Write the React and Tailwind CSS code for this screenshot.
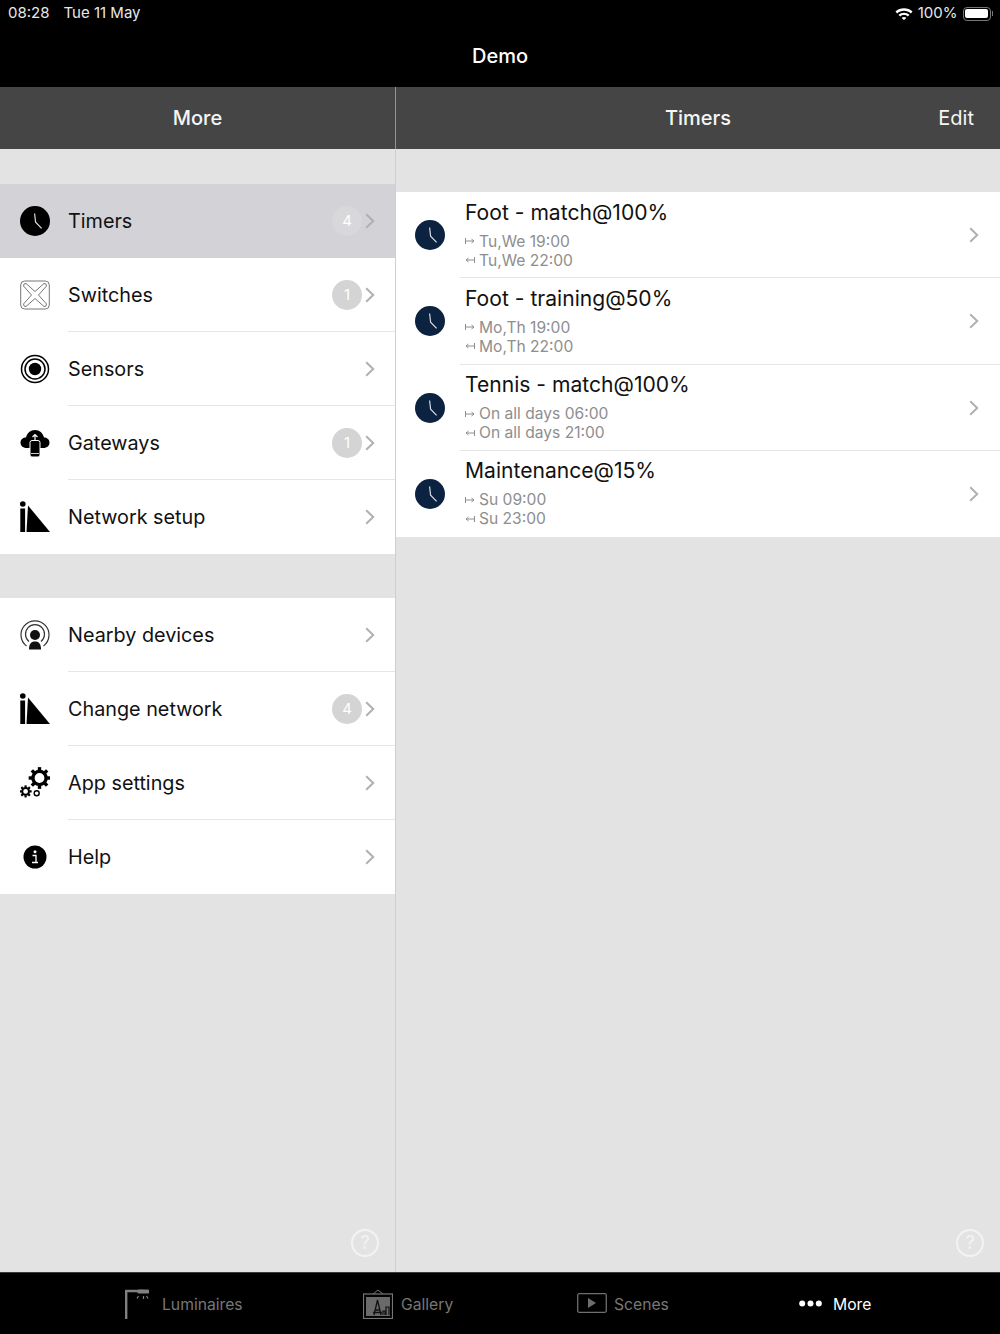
import React from "react";

const Clock = ({ fill = "#000" }) => (
  <svg width="30" height="30" viewBox="0 0 30 30" className="shrink-0">
    <circle cx="15" cy="15" r="15" fill={fill} />
    <path d="M14.6 7.5 L15.6 16.2 L21.6 22.4" fill="none" stroke="#d8dce2" strokeWidth="1.2" />
  </svg>
);

const SwitchIcon = () => (
  <svg width="30" height="30" viewBox="0 0 30 30" fill="none" stroke="#777" strokeWidth="1">
    <rect x="0.7" y="1" width="28.6" height="28" rx="4" />
    <path d="M6 3.5 L15 11.5 L24 3.5 Q26.5 3 26.5 6 L18.5 15 L26.5 24 Q26.5 27 24 26.5 L15 18.5 L6 26.5 Q3.5 27 3.5 24 L11.5 15 L3.5 6 Q3.5 3 6 3.5 Z" />
  </svg>
);

const SensorIcon = () => (
  <svg width="30" height="30" viewBox="0 0 30 30" fill="none" stroke="#000" strokeWidth="1.5">
    <circle cx="15" cy="15" r="13.5" />
    <circle cx="15" cy="15" r="10" />
    <circle cx="15" cy="15" r="6.2" fill="#000" stroke="none" />
  </svg>
);

const GatewayIcon = () => (
  <svg width="30" height="30" viewBox="0 0 30 30">
    <path d="M7 20 C2.5 20 0.5 17.5 0.5 14.5 C0.5 11.5 3 9.5 6 9.5 C7 5 10.5 2 15 2 C19.5 2 23 5 24 9.5 C27 9.5 29.5 11.5 29.5 14.5 C29.5 17.5 27.5 20 23 20 Z" fill="#000" />
    <rect x="10" y="12.5" width="10" height="16.5" rx="2" fill="#000" stroke="#fff" strokeWidth="1" />
    <path d="M15 13 V6.5 M12.5 9 L15 6.5 L17.5 9" fill="none" stroke="#fff" strokeWidth="1.2" />
    <path d="M11 25.5 H19" stroke="#fff" strokeWidth="0.8" />
  </svg>
);

const NetworkIcon = () => (
  <svg width="30" height="32" viewBox="0 0 30 32">
    <circle cx="2.8" cy="3" r="2.8" fill="#000" />
    <rect x="0.3" y="7.5" width="4.8" height="23.5" fill="#000" />
    <path d="M8 4.5 L30 31 H6.5 Z" fill="#000" />
  </svg>
);

const NearbyIcon = () => (
  <svg width="30" height="30" viewBox="0 0 30 30" fill="none" stroke="#333" strokeWidth="1.2">
    <path d="M6.5 26 A14 14 0 1 1 23.5 26" />
    <path d="M9 21.5 A9.5 9.5 0 1 1 21 21.5" />
    <circle cx="15" cy="15" r="5" fill="#111" stroke="none" />
    <path d="M9 29.5 C9 24 11 21.5 15 21.5 C19 21.5 21 24 21 29.5 Z" fill="#111" stroke="none" />
  </svg>
);

const Gear = ({ cx, cy, r, ring, tooth }) => (
  <g>
    <circle cx={cx} cy={cy} r={r} fill="none" stroke="#000" strokeWidth={ring} />
    {[0, 45, 90, 135, 180, 225, 270, 315].map((a) => (
      <rect
        key={a}
        x={cx - tooth / 2}
        y={cy - r - ring / 2 - tooth * 0.75}
        width={tooth}
        height={tooth}
        fill="#000"
        transform={`rotate(${a} ${cx} ${cy})`}
      />
    ))}
  </g>
);

const SettingsIcon = () => (
  <svg width="30" height="32" viewBox="0 0 30 32">
    <Gear cx={19.5} cy={11} r={6.6} ring={3.4} tooth={3.4} />
    <Gear cx={5.6} cy={24.4} r={3.4} ring={2} tooth={2.2} />
    <circle cx="16.7" cy="26.2" r="2.5" fill="none" stroke="#000" strokeWidth="1.4" />
  </svg>
);

const InfoIcon = () => (
  <svg width="24" height="24" viewBox="0 0 24 24">
    <circle cx="12" cy="12" r="11.5" fill="#000" />
    <circle cx="12" cy="6.8" r="1.5" fill="#fff" />
    <path d="M9.5 10.5 H13 V17.5 H15 M9 17.5 H15" fill="none" stroke="#fff" strokeWidth="1.3" />
  </svg>
);

const Chevron = () => (
  <svg width="10" height="16" viewBox="0 0 10 16" fill="none" stroke="#b0b0b3" strokeWidth="2" className="shrink-0">
    <path d="M1.2 1.2 L8.2 8 L1.2 14.8" />
  </svg>
);

const Row = ({ icon, label, badge, selected, last }) => (
  <div className={`relative h-[74px] flex items-center pl-5 pr-5 ${selected ? "bg-[#d2d2d7]" : "bg-white"}`}>
    <div className="w-[30px] h-[32px] flex items-center justify-center shrink-0">{icon}</div>
    <span className="ml-[18px] pt-[1px] text-[19.8px] leading-none text-[#111] flex-1">{label}</span>
    {badge && (
      <span
        className={`w-[30px] h-[30px] rounded-full flex items-center justify-center text-[15px] text-white mr-[3px] ${
          selected ? "bg-[#d8d8db]" : "bg-[#d4d4d4]"
        }`}
      >
        {badge}
      </span>
    )}
    <Chevron />
    {!last && !selected && <div className="absolute left-[68px] right-0 bottom-0 h-px bg-[#e6e6e6]" />}
  </div>
);

const InArrow = ({ flip }) => (
  <svg width="10" height="8" viewBox="0 0 10 8" fill="none" stroke="#8e8e8e" strokeWidth="1" className={`shrink-0 ${flip ? "-scale-x-100" : ""}`}>
    <path d="M0.5 1 V7 M0.5 4 H9 M6.5 2 L9 4 L6.5 6" />
  </svg>
);

const TimerRow = ({ title, on, off, last }) => (
  <div className="relative h-[86.25px] flex items-center pl-[19px] pr-[21px] bg-white">
    <Clock fill="#0b2240" />
    <div className="ml-[20px] flex-1 flex flex-col translate-y-px">
      <span className="text-[21.1px] leading-[26px] text-[#111] -mt-[3px]">{title}</span>
      <div className="mt-[6px] flex items-center gap-[4px] text-[15.6px] leading-[19px] text-[#8e8e8e]">
        <InArrow />
        <span>{on}</span>
      </div>
      <div className="flex items-center gap-[4px] text-[15.6px] leading-[19px] text-[#8e8e8e]">
        <InArrow flip />
        <span>{off}</span>
      </div>
    </div>
    <Chevron />
    {!last && <div className="absolute left-[64px] right-0 bottom-0 h-px bg-[#e6e6e6]" />}
  </div>
);

const Question = () => (
  <div className="w-[28px] h-[28px] rounded-full border-2 border-[#f3f3f3] flex items-center justify-center text-[18px] leading-none text-[#f3f3f3]">
    ?
  </div>
);

const Tab = ({ icon, label, active, className }) => (
  <div className={`flex items-center ${className}`}>
    {icon}
    <span className={`text-[15.7px] translate-y-px ${active ? "text-white" : "text-[#777]"}`}>{label}</span>
  </div>
);

export default function App() {
  return (
    <div className="w-[1000px] h-[1334px] flex flex-col bg-[#e3e3e3] overflow-hidden font-['Inter','Liberation_Sans',sans-serif]">
      {/* Status + nav */}
      <div className="h-[87px] bg-black shrink-0 flex flex-col text-white">
        <div className="h-[27px] flex items-center justify-between pl-2 pr-[7px] text-[15px] text-[#e8e8e8]">
          <div className="flex gap-[14px]">
            <span>08:28</span>
            <span>Tue 11 May</span>
          </div>
          <div className="flex items-center gap-[5px]">
            <svg width="18" height="13" viewBox="0 0 18 13">
              <path d="M0.5 4.6 C5 0.2 13 0.2 17.5 4.6 L15.9 6.4 C12.2 2.9 5.8 2.9 2.1 6.4 Z M3.5 7.8 C6.6 5 11.4 5 14.5 7.8 L12.9 9.5 C10.6 7.6 7.4 7.6 5.1 9.5 Z M6.6 10.9 C8 9.8 10 9.8 11.4 10.9 L9 13 Z" fill="#fff" />
            </svg>
            <span>100%</span>
            <div className="flex items-center">
              <div className="w-[28px] h-[14px] rounded-[4px] border border-[#777] p-[1.5px]">
                <div className="w-full h-full rounded-[2px] bg-white" />
              </div>
              <div className="w-[1.5px] h-[5px] bg-[#777] ml-[1px]" />
            </div>
          </div>
        </div>
        <div className="h-[58px] flex items-center justify-center text-[20px] font-medium">Demo</div>
      </div>

      {/* Headers */}
      <div className="h-[62px] bg-[#454545] shrink-0 flex text-[#f5f5f5] text-[20px]">
        <div className="w-[395px] flex items-center justify-center font-medium">More</div>
        <div className="w-px bg-[#c8c8c8] opacity-60" />
        <div className="relative flex-1 flex items-center justify-center font-medium">
          Timers
          <span className="absolute right-[26px] font-normal">Edit</span>
        </div>
      </div>

      {/* Body */}
      <div className="flex-1 flex min-h-0">
        <div className="relative w-[395px] pt-[35px]">
          <Row selected icon={<Clock />} label="Timers" badge="4" />
          <Row icon={<SwitchIcon />} label="Switches" badge="1" />
          <Row icon={<SensorIcon />} label="Sensors" />
          <Row icon={<GatewayIcon />} label="Gateways" badge="1" />
          <Row last icon={<NetworkIcon />} label="Network setup" />
          <div className="h-[44px]" />
          <Row icon={<NearbyIcon />} label="Nearby devices" />
          <Row icon={<NetworkIcon />} label="Change network" badge="4" />
          <Row icon={<SettingsIcon />} label="App settings" />
          <Row last icon={<InfoIcon />} label="Help" />
          <div className="absolute right-[16px] bottom-[15px]">
            <Question />
          </div>
        </div>
        <div className="w-px bg-[#cfcfcf]" />
        <div className="relative flex-1 pt-[43px]">
          <TimerRow title="Foot - match@100%" on="Tu,We 19:00" off="Tu,We 22:00" />
          <TimerRow title="Foot - training@50%" on="Mo,Th 19:00" off="Mo,Th 22:00" />
          <TimerRow title="Tennis - match@100%" on="On all days 06:00" off="On all days 21:00" />
          <TimerRow last title="Maintenance@15%" on="Su 09:00" off="Su 23:00" />
          <div className="absolute right-[16px] bottom-[15px]">
            <Question />
          </div>
        </div>
      </div>

      {/* Tab bar */}
      <div className="relative h-[62px] bg-black shrink-0 flex items-center border-t border-[#3a3a3a]">
        <Tab
          className="ml-[125px] w-[238px] gap-[13px]"
          label="Luminaires"
          icon={
            <svg width="24" height="30" viewBox="0 0 24 30" fill="none" stroke="#808080">
              <path d="M1.2 30 V2 H18" strokeWidth="2.4" />
              <path d="M14 2.5 H22.5" strokeWidth="4" strokeLinecap="round" />
              <path d="M18.5 7 V10 M13.5 7 L12 9.5 M21.5 7 L23 9.5" strokeWidth="1.2" />
            </svg>
          }
        />
        <Tab
          className="w-[214px] gap-[8px]"
          label="Gallery"
          icon={
            <svg width="30" height="30" viewBox="0 0 30 30">
              <path d="M10 5 L15 1 L20 5" fill="none" stroke="#777" strokeWidth="1" />
              <rect x="0.5" y="5" width="29" height="24.5" fill="none" stroke="#777" strokeWidth="1.2" />
              <rect x="3" y="8" width="24" height="19" fill="#6a6a6a" />
              <path d="M11 26 L14.5 11 L18 26 M12 21 H17 M10 23.5 H19" fill="none" stroke="#111" strokeWidth="1.3" />
              <path d="M20 26 V22 H22 V26 M23 26 V18 H26 V26" fill="none" stroke="#111" strokeWidth="1.2" />
            </svg>
          }
        />
        <Tab
          className="w-[222px] gap-[7px]"
          label="Scenes"
          icon={
            <svg width="30" height="20" viewBox="0 0 30 20">
              <rect x="0.7" y="0.7" width="28.6" height="18.6" rx="1.5" fill="none" stroke="#6e6e6e" strokeWidth="1.3" />
              <path d="M11 5 L19 10 L11 15 Z" fill="#6e6e6e" />
            </svg>
          }
        />
        <Tab
          className="gap-[11px]"
          active
          label="More"
          icon={
            <svg width="23" height="7" viewBox="0 0 23 7" fill="#fff">
              <circle cx="3.2" cy="3.5" r="3" />
              <circle cx="11.5" cy="3.5" r="3" />
              <circle cx="19.8" cy="3.5" r="3" />
            </svg>
          }
        />
      </div>
    </div>
  );
}
